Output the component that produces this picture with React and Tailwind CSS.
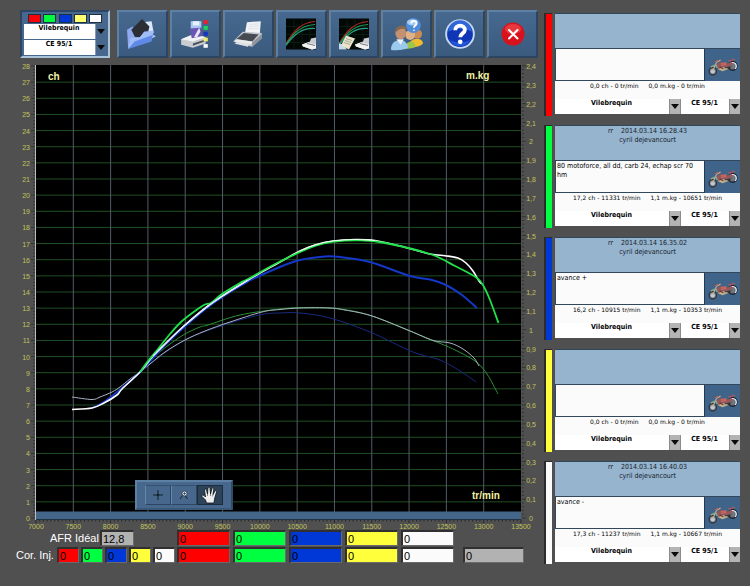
import React from "react";

const SERIES = [
  { name: "rouge", bg: "bg-[#ff0000]" },
  { name: "vert", bg: "bg-[#00ff41]" },
  { name: "bleu", bg: "bg-[#0038d8]" },
  { name: "jaune", bg: "bg-[#ffff3c]" },
  { name: "blanc", bg: "bg-[#fbfbfb]" },
];

const SWATCHES = ["bg-[#fb0006]", "bg-[#00fb3c]", "bg-[#0038d8]", "bg-[#ffff70]", "bg-white"];

const RUNS = [
  { title: "", owner: "", note: "", power: "0,0 ch - 0 tr/min", torque: "0,0 m.kg - 0 tr/min" },
  {
    title: "2014.03.14 16.28.43",
    owner: "cyril dejevancourt",
    note: "80 motoforce, all dd, carb 24, echap scr 70 hm",
    power: "17,2 ch - 11331 tr/min",
    torque: "1,1 m.kg - 10651 tr/min",
  },
  {
    title: "2014.03.14 16.35.02",
    owner: "cyril dejevancourt",
    note: "avance +",
    power: "16,2 ch - 10915 tr/min",
    torque: "1,1 m.kg - 10353 tr/min",
  },
  { title: "", owner: "", note: "", power: "0,0 ch - 0 tr/min", torque: "0,0 m.kg - 0 tr/min" },
  {
    title: "2014.03.14 16.40.03",
    owner: "cyril dejevancourt",
    note: "avance -",
    power: "17,3 ch - 11237 tr/min",
    torque: "1,1 m.kg - 10667 tr/min",
  },
];

/* ---------- chart ---------- */

const LEFT = 36;
const RIGHT = 521;
const TOP = 66;
const ZERO = 518;
const xOf = (rpm) => LEFT + ((rpm - 7000) * (RIGHT - LEFT)) / 6500;
const yOf = (ch) => ZERO - (ch * (ZERO - TOP)) / 28;
const range = (n) => Array.from({ length: n }, (_, i) => i);

const CURVES = [
  {
    color: "#1a2a80", width: 1,
    pts: [[140, 372], [150, 364], [185, 340], [230, 323], [262, 314.5], [280, 313], [300, 313], [330, 318], [370, 332], [413, 352], [440, 360], [460, 371], [476, 382]],
  },
  {
    color: "#2c8f35", width: 1,
    pts: [[140, 372], [150, 360], [170, 344], [185, 334], [200, 327], [208, 325], [240, 315], [280, 309], [305, 307.5], [335, 308.5], [372, 316], [433, 340.5], [455, 350], [475, 361], [487, 374], [498, 394]],
  },
  {
    color: "#a9b2c4", width: 1,
    pts: [[72, 397], [92, 399.5], [100, 397], [112, 392], [120, 387], [130, 379], [140, 372], [150, 364], [165, 352], [185, 340], [205, 331], [230, 322], [262, 312], [280, 309.5], [300, 308], [330, 308], [345, 310], [372, 316], [410, 331], [433, 340.5], [450, 343], [463, 349], [474, 358], [479, 366]],
  },
  {
    color: "#1437c8", width: 2,
    pts: [[92, 408], [104, 402], [122, 388], [140, 372], [153, 358], [165, 345], [190, 322], [215, 302], [247, 282], [280, 267], [300, 260], [325, 256.5], [340, 257], [370, 262], [410, 276], [432, 280], [446, 285], [462, 295], [477, 308]],
  },
  {
    color: "#ffffff", width: 1.6,
    pts: [[72, 409.5], [92, 408], [104, 403], [117, 395], [122, 389], [140, 372], [153, 356], [165, 344], [185, 325], [212, 303], [248, 280], [280, 262], [300, 251], [315, 245], [333, 241], [355, 239.5], [375, 240.5], [400, 246], [430, 254], [445, 255.7], [458, 258], [466, 263], [473, 271], [479, 281], [482, 284]],
  },
  {
    color: "#1fe04a", width: 1.8,
    pts: [[140, 372], [148, 361], [158, 349], [170, 334], [181, 322], [195, 311], [205, 304.5], [211, 303], [222, 294], [240, 283], [248, 279], [280, 261.5], [315, 246], [335, 241.5], [360, 240.4], [385, 243], [430, 254], [455, 266], [477, 278], [484, 287], [490, 300], [498.5, 323]],
  },
];

/* Catmull-Rom spline through the sampled points */
function spline(pts) {
  let d = `M${pts[0][0]} ${pts[0][1]}`;
  for (let i = 0; i < pts.length - 1; i++) {
    const a = pts[i - 1] || pts[i];
    const b = pts[i];
    const c = pts[i + 1];
    const e = pts[i + 2] || c;
    const k = 6;
    d += `C${b[0] + (c[0] - a[0]) / k} ${b[1] + (c[1] - a[1]) / k} ${c[0] - (e[0] - b[0]) / k} ${c[1] - (e[1] - b[1]) / k} ${c[0]} ${c[1]}`;
  }
  return d;
}

function Chart() {
  return (
    <svg viewBox="16 60 528 470" className="block h-auto w-full" role="img" aria-label="Puissance et couple selon le régime">
      <rect x={LEFT} y="65" width={RIGHT - LEFT} height="455" fill="#000" />
      {range(27).map((i) => (
        <path key={i} d={`M${LEFT} ${yOf(i + 1)}H${RIGHT}`} stroke="#1f4f24" strokeWidth="1" />
      ))}
      {range(12).map((i) => (
        <path key={i} d={`M${xOf(7500 + i * 500)} 65V512`} stroke="#535c66" strokeWidth="1" />
      ))}
      <rect x={LEFT} y="511.5" width={RIGHT - LEFT} height="8" fill="#446688" />
      <path d={`M${LEFT - 0.5} 65V520`} stroke="#b9c0c0" strokeWidth="1" />

      {range(141).map((i) => (
        <path key={i} d={`M${i % 5 ? 33 : 31} ${yOf(i / 5)}H35`} stroke="#2a2a2a" strokeWidth="0.7" />
      ))}
      {range(121).map((i) => (
        <path key={i} d={`M522 ${ZERO - (i * (ZERO - TOP)) / 120}H${i % 5 ? 524 : 526}`} stroke="#262626" strokeWidth="0.7" />
      ))}
      {range(131).map((i) => (
        <path key={i} d={`M${xOf(7000 + i * 50)} 520V${i % 10 ? 521.5 : 523}`} stroke="#222" strokeWidth="0.9" />
      ))}

      <g fill="#c2c25c" fontSize="7" fontFamily="Liberation Sans, sans-serif">
        {range(29).map((i) => (
          <text key={i} x="30" y={yOf(i) + 3} textAnchor="end">{i}</text>
        ))}
        {range(25).map((i) => (
          <text key={i} x="531" y={ZERO - (i * (ZERO - TOP)) / 24 + 3} textAnchor="middle">
            {i % 10 === 0 ? i / 10 : (i / 10).toFixed(1).replace(".", ",")}
          </text>
        ))}
        {range(14).map((i) => (
          <text key={i} x={xOf(7000 + i * 500)} y="529" textAnchor="middle">{7000 + i * 500}</text>
        ))}
      </g>

      {CURVES.map((c, i) => (
        <path key={i} d={spline(c.pts)} fill="none" stroke={c.color} strokeWidth={c.width} strokeLinejoin="round" />
      ))}
      {/* stretches where the white trace shows above the green one */}
      <path d={spline([[300, 251], [315, 245], [333, 241], [355, 239.5], [375, 240.5]])} fill="none" stroke="#e9ffe9" strokeWidth="1.2" />
      <path d={spline([[153, 356], [165, 344], [185, 325], [212, 303], [248, 280]])} fill="none" stroke="#dfe9ff" strokeWidth="1.2" />

      <g fill="#f2f2a6" fontSize="10" fontWeight="bold" fontFamily="Liberation Sans, sans-serif">
        <text x="48" y="80">ch</text>
        <text x="466" y="79">m.kg</text>
        <text x="472" y="499">tr/min</text>
      </g>
    </svg>
  );
}

/* ---------- icons ---------- */

function FolderIcon() {
  return (
    <svg viewBox="0 0 30 30" className="h-8 w-8">
      <path d="M15 4L24 3L26 14L18 18Z" fill="#dde8fa" />
      <path d="M23 9L24 15L28 17L23 20Z" fill="#b5cbf3" />
      <path d="M1 11L6 8L8 10L9 22L2 28Z" fill="#8fabf0" />
      <path d="M5 11L15 1L22 8L20 16L9 19Z" fill="#2b2e35" />
      <path d="M2 29L4 18L13 18L17 13L26 12L24 22Z" fill="#5f8ae8" />
      <path d="M2 29L4 18L13 18L17 13L26 12L25 16L8 22Z" fill="#a0bdf8" />
    </svg>
  );
}

function SaveIcon() {
  return (
    <svg viewBox="0 0 30 30" className="h-8 w-8">
      <path d="M2 20L14 15L25 18V24L13 28L2 25Z" fill="#c9ccd0" />
      <path d="M2 20L14 15L25 18L13 22Z" fill="#f1f2f3" />
      <path d="M13 24L24 20.5V22L13 26Z" fill="#4c525c" />
      <path d="M11 3H21V10H11Z" fill="#a9c9f5" />
      <path d="M13 3H19V7H13Z" fill="#e8f1ff" />
      <path d="M10 10L21 9V17L12 19Z" fill="#6a55b4" />
      <path d="M14 18L19 9L20 13L17 18Z" fill="#e9e3f4" />
      <rect x="23" y="2" width="4" height="3.6" fill="#e3232d" />
      <rect x="23" y="7.5" width="4" height="3.6" fill="#18d65a" />
      <rect x="23" y="13" width="4" height="3.6" fill="#1433c4" />
      <rect x="23" y="18.5" width="4" height="3.4" fill="#eeee68" />
      <rect x="23" y="24.5" width="4" height="3.4" fill="#fff" />
    </svg>
  );
}

function PrinterIcon() {
  return (
    <svg viewBox="0 0 30 30" className="h-8 w-8">
      <path d="M14 4L27 3L26 16L12 15Z" fill="#f1f3f5" />
      <path d="M16 6L25 5.5M15.500 8L25 7.500M15 10L25 10" stroke="#d5d9de" strokeWidth="0.600" />
      <path d="M2 21L10 13L28 14V19L19 27L4 24Z" fill="#bfc4c9" />
      <path d="M4 20L11 14L25 15.500L19 22Z" fill="#464b52" />
      <path d="M1 22L5 20L19 22L18 25Z" fill="#e9ebed" />
      <path d="M19 23L28 15V19L19 27Z" fill="#8c9298" />
      <path d="M5 23L16 24L15 27L2 24Z" fill="#dfe2e4" />
    </svg>
  );
}

function GraphIcon({ paper }) {
  return (
    <svg viewBox="0 0 30 31" className="h-8 w-[30px]">
      <rect width="30" height="31" fill="#030806" />
      <path d="M0 8H30M0 16H30M0 24H30M8 0V31M16 0V31M24 0V31" stroke="#0d2a18" strokeWidth="0.6" />
      <path d="M0 25C7 14 14 4 29 3" fill="none" stroke="#b02a20" strokeWidth="1.1" />
      <path d="M0 26C8 14 15 7 29 6" fill="none" stroke="#1fa45a" strokeWidth="1.1" />
      <path d="M0 27C8 16 16 9 29 10" fill="none" stroke="#28a08a" strokeWidth="1.1" />
      <path d="M16 26L24 23L25 20L30 19V30L26 31L17 28Z" fill="#c9ccd0" />
      <path d="M16 26L22 24L30 26V30L26 31L17 28Z" fill="#f2f2f2" />
      <path d="M21 25L29 27" stroke="#777" />
      {paper && (
        <g>
          <path d="M0 25L4 26L8 31H0Z" fill="#c3dcf4" />
          <path d="M7 17L16 20L10 31L2 27Z" fill="#e9e4cb" />
          <path d="M7 20L13 22M6 22L12 24M5 24L11 26" stroke="#9b9780" strokeWidth="0.8" />
        </g>
      )}
    </svg>
  );
}

function UsersIcon() {
  return (
    <svg viewBox="0 0 32 32" className="h-[34px] w-[34px]">
      <path d="M17 29C18 18 31 19 31 25C29 28 22 29 17 29Z" fill="#f0bb2c" />
      <path d="M14 30C14 22 24 21 24 28C20 30 17 30 14 30Z" fill="#9cc74b" />
      <circle cx="26" cy="16" r="4.200" fill="#c98b53" />
      <circle cx="19" cy="17" r="4.600" fill="#e0b184" />
      <circle cx="22" cy="8" r="7" fill="#4f8bd6" />
      <ellipse cx="21" cy="5" rx="5" ry="3" fill="#a6cdf4" />
      <path d="M20 6C20 3 25 3 25 6C25 8 22.500 8 22.500 10M22.500 12V13" fill="none" stroke="#fff" strokeWidth="1.800" />
      <path d="M1 31C0 20 16 18 17 29C14 31 5 32 1 31Z" fill="#9cc9ee" />
      <path d="M6 21L10 26L13 21Z" fill="#e7f2fb" />
      <ellipse cx="10" cy="15" rx="5" ry="6" fill="#c59271" />
      <path d="M5 15C4 7 15 6 16 12C12 10 8 11 5 15Z" fill="#8a6850" />
    </svg>
  );
}

function HelpIcon() {
  return (
    <svg viewBox="0 0 30 30" className="h-8 w-8">
      <circle cx="15" cy="15" r="13" fill="#0f36b4" stroke="#c6d8f2" strokeWidth="1.800" />
      <path d="M4 13A11 11 0 0 1 26 13C20 9 10 9 4 13Z" fill="#2f66d8" />
      <path d="M5 20A11 11 0 0 0 25 20C20 24 10 24 5 20Z" fill="#2358dc" />
      <path d="M10.500 11.500C10.500 5.500 20 6 19.500 11.500C19.200 14.500 15.200 14.500 15.200 18" fill="none" stroke="#fff" strokeWidth="3.600" />
      <circle cx="15.200" cy="22.300" r="2.200" fill="#fff" />
    </svg>
  );
}

function CloseIcon() {
  return (
    <svg viewBox="0 0 26 26" className="h-[26px] w-[26px]">
      <circle cx="13" cy="13" r="11.500" fill="#d8121c" />
      <ellipse cx="13" cy="8" rx="8" ry="5" fill="#ee4a4c" opacity="0.700" />
      <path d="M9 9L17.500 17.500M17.500 9L9 17.500" stroke="#fff" strokeWidth="2" strokeLinecap="round" />
    </svg>
  );
}

function Motorcycle() {
  return (
    <svg viewBox="0 0 36 32" className="h-full w-full" role="img" aria-label="Moto">
      <circle cx="28.500" cy="17" r="4.300" fill="#6e747c" stroke="#20242a" strokeWidth="1.600" />
      <path d="M26 14.500A3.500 3.500 0 0 1 31 20" fill="none" stroke="#e6e8ea" strokeWidth="1.300" />
      <circle cx="8" cy="22.500" r="3.700" fill="#8d949b" stroke="#2a3038" strokeWidth="1.300" />
      <circle cx="8" cy="22.500" r="2" fill="#c3c9cf" />
      <path d="M8 22L12 13L16 11" fill="none" stroke="#cfae8a" strokeWidth="1.200" />
      <path d="M6 18L11 16L13 19" fill="none" stroke="#8fae8b" strokeWidth="1.500" />
      <path d="M12 15L17 13L22 15L27 13L29 15L24 18L21 21L14 21Z" fill="#96575b" />
      <path d="M16 14L22 13L22 16L17 17Z" fill="#c3655f" />
      <path d="M13 20L20 18L24 20L18 22.500Z" fill="#c9b28c" />
      <path d="M15 18L19 20M20 19L27 18" stroke="#3c2c35" strokeWidth="1" />
      <path d="M24 12L31 10M10 13L14 11" stroke="#b85b59" strokeWidth="1.100" />
    </svg>
  );
}

function HandIcon() {
  return (
    <svg viewBox="0 0 18 18" className="h-[18px] w-[18px]">
      <path
        d="M5.500 17L4.500 14L1 10.500C0.500 9 2 8.500 3 9.500L4.500 11L3.500 4C3.500 2.500 5 2.500 5.500 4L6.500 8L7 2C7.200 0.700 8.800 0.700 9 2L9.500 8L11 2.500C11.500 1.200 13 1.700 12.800 3L12 8.500L14 5C14.800 4 16 4.700 15.500 6L13.500 13L13 17Z"
        fill="#eef0f0" stroke="#0c1116" strokeWidth="0.800"
      />
      <path d="M6.500 8V10M9.500 8V10M12 8.500L11.700 10.500" stroke="#444" strokeWidth="0.600" />
    </svg>
  );
}

/* ---------- controls ---------- */

function DropDown({ label, value, variant }) {
  const light = variant === "light";
  return (
    <div className="relative h-[15px]">
      <select
        aria-label={label}
        defaultValue={value}
        className="block h-full w-full appearance-none bg-white pr-3 pb-[6px] font-['DejaVu_Sans_Condensed','DejaVu_Sans',sans-serif] text-[7px] leading-[9px] font-bold text-black [text-align-last:center]"
      >
        <option>{value}</option>
      </select>
      <span
        aria-hidden="true"
        className={`pointer-events-none absolute inset-y-0 right-0 flex w-[11px] items-center justify-center border-l ${light ? "border-[#8a8a8a] bg-[#b4b4b4]" : "border-[#7f9dba] bg-[#47688c]"}`}
      >
        <svg viewBox="0 0 8 5" className="h-[5px] w-2"><path d="M0 0H8L4 5Z" fill="#0a0a0a" /></svg>
      </span>
    </div>
  );
}

function ToolButton({ label, children }) {
  return (
    <button
      type="button"
      aria-label={label}
      className="flex h-12 min-w-0 flex-1 items-center justify-center border-2 border-t-[#5d80a5] border-r-[#2b4562] border-b-[#2b4562] border-l-[#5d80a5] bg-linear-to-b from-[#47698f] to-[#3a5a7e]"
    >
      {children}
    </button>
  );
}

function Cell({ label, bg, width, value = "0" }) {
  return (
    <input
      aria-label={label}
      defaultValue={value}
      className={`block h-4 ${width} ${bg} border-t-2 border-r border-b border-l-2 border-t-[#303030] border-r-[#6a6a6a] border-b-[#6a6a6a] border-l-[#303030] px-px text-[11px] leading-3 text-black`}
    />
  );
}

function RunPanel({ run, series }) {
  return (
    <article className="flex h-[103px] gap-[3px]">
      <div className={`w-2 shrink-0 border-t border-l-2 border-[#2b2b2b] ${series.bg}`} />
      <div className="flex h-[101px] min-w-0 flex-1 flex-col font-['DejaVu_Sans_Condensed','DejaVu_Sans',sans-serif] text-black">
        <header className="h-9 border-y border-[#33475c] bg-[#96b4ce] text-center text-[7px] leading-[9px] text-[#15202b]">
          {run.title && (
            <>
              <p className="pt-px"><span className="mr-2">rr</span>{run.title}</p>
              <p>{run.owner}</p>
            </>
          )}
        </header>
        <div className="flex h-8">
          <textarea
            aria-label={`Commentaire ${series.name}`}
            defaultValue={run.note}
            className="block h-full min-w-0 flex-1 resize-none overflow-hidden border-b border-l border-[#33475c] bg-[#fbfbfb] pt-px pr-1 pl-px text-[7px] leading-[9px]"
          />
          <div className="h-full w-9 border-l border-[#23394f] bg-[#3f6389]"><Motorcycle /></div>
        </div>
        <p className="flex h-[18px] justify-center gap-[10px] bg-[#fbfbfb] font-['DejaVu_Sans',sans-serif] text-[6px] leading-[9px] whitespace-nowrap">
          <span>{run.power}</span>
          <span>{run.torque}</span>
        </p>
        <div className="flex gap-px bg-[#8c8c8c]">
          <div className="min-w-0 flex-1"><DropDown label={`Mesure ${series.name}`} value="Vilebrequin" variant="light" /></div>
          <div className="w-[59px]"><DropDown label={`Norme ${series.name}`} value="CE 95/1" variant="light" /></div>
        </div>
      </div>
    </article>
  );
}

export default function App() {
  return (
    <div className="flex min-h-screen bg-[#505050] font-['Liberation_Sans',Arial,sans-serif]">
      <main className="min-w-0 flex-1 pt-[10px] pl-4">
        <div className="flex h-[50px] items-start gap-[7px] pr-[6px] pl-1">
          <div className="h-12 w-[90px] shrink-0 border-2 border-t-[#2b4562] border-r-[#a9c3da] border-b-[#a9c3da] border-l-[#2b4562] bg-[#47688c] px-0.5 pt-0.5">
            <div className="mb-px flex h-[9px] justify-between pr-1 pl-1">
              {SWATCHES.map((bg) => (
                <button key={bg} type="button" aria-label="Courbe" className={`h-[9px] w-[13px] border border-[#1e2f42] ${bg}`} />
              ))}
            </div>
            <div className="flex flex-col gap-px">
              <DropDown label="Mesure" value="Vilebrequin" />
              <DropDown label="Norme" value="CE 95/1" />
            </div>
          </div>
          <div className="flex min-w-0 flex-1 gap-0.5">
            <ToolButton label="Ouvrir"><FolderIcon /></ToolButton>
            <ToolButton label="Enregistrer"><SaveIcon /></ToolButton>
            <ToolButton label="Imprimer"><PrinterIcon /></ToolButton>
            <ToolButton label="Imprimer la courbe"><GraphIcon /></ToolButton>
            <ToolButton label="Imprimer le rapport"><GraphIcon paper /></ToolButton>
            <ToolButton label="Clients"><UsersIcon /></ToolButton>
            <ToolButton label="Aide"><HelpIcon /></ToolButton>
            <ToolButton label="Quitter"><CloseIcon /></ToolButton>
          </div>
        </div>

        <div className="relative">
          <Chart />
          <div className="absolute top-[420px] left-[119px] flex h-[30px] w-[98px] border-2 border-t-[#5d80a5] border-r-[#2f4b6a] border-b-[#3a5878] border-l-[#5d80a5] bg-[#47688c] px-2 py-[3px]">
            <button type="button" aria-label="Curseur" className="flex flex-1 items-center justify-center border border-t-[#34516f] border-r-[#2b4562] border-b-[#2b4562] border-l-[#6588ab]">
              <svg viewBox="0 0 10 10" className="h-[10px] w-[10px]"><path d="M5 0V10M0 5H10" stroke="#16202b" strokeWidth="1" /><circle cx="5" cy="5" r="1.2" fill="#16202b" /></svg>
            </button>
            <button type="button" aria-label="Zoom" className="flex flex-1 items-center justify-center border border-t-[#34516f] border-r-[#2b4562] border-b-[#2b4562] border-l-[#6588ab]">
              <svg viewBox="0 0 10 10" className="h-[10px] w-[10px]"><circle cx="5.500" cy="3.500" r="2.500" fill="#e4ebf2" stroke="#26384a" strokeWidth="0.800" /><path d="M5.500 2V5M4 3.500H7" stroke="#26384a" strokeWidth="0.700" /><path d="M3.500 5.500L1 9M6.500 6L8.500 9" stroke="#16202b" strokeWidth="1" /></svg>
            </button>
            <button type="button" aria-label="Déplacer" className="flex flex-1 items-center justify-center border border-[#1b2c3e] bg-[#2c435a]">
              <HandIcon />
            </button>
          </div>
        </div>

        <div className="flex items-end">
          <div className="flex w-[161px] flex-col gap-px text-[11px] leading-4 text-white">
            <div className="flex pl-[34px]">
              <span className="w-[50px] whitespace-nowrap">AFR Idéal</span>
              <Cell label="AFR Idéal" bg="bg-[#b2b2b2]" width="w-[34px]" value="12,8" />
            </div>
            <div className="flex">
              <span className="w-[41px] whitespace-nowrap">Cor. Inj.</span>
              <div className="flex gap-0.5">
                {SERIES.map((s) => (
                  <Cell key={s.name} label={`Correction injection ${s.name}`} bg={s.bg} width="w-[22px]" />
                ))}
              </div>
            </div>
          </div>
          <div className="grid grid-cols-5 gap-x-[3px] gap-y-px">
            {[1, 2].map((row) =>
              SERIES.map((s) => (
                <Cell key={`${row}${s.name}`} label={`Valeur ${row} ${s.name}`} bg={s.bg} width="w-[53px]" />
              ))
            )}
          </div>
          <div className="ml-[9px]"><Cell label="Valeur" bg="bg-[#b2b2b2]" width="w-[61px]" /></div>
        </div>
      </main>

      <aside className="flex w-[206px] shrink-0 flex-col gap-[9px] pt-[13px] pr-[10px]">
        {RUNS.map((run, i) => (
          <RunPanel key={SERIES[i].name} run={run} series={SERIES[i]} />
        ))}
      </aside>
    </div>
  );
}
